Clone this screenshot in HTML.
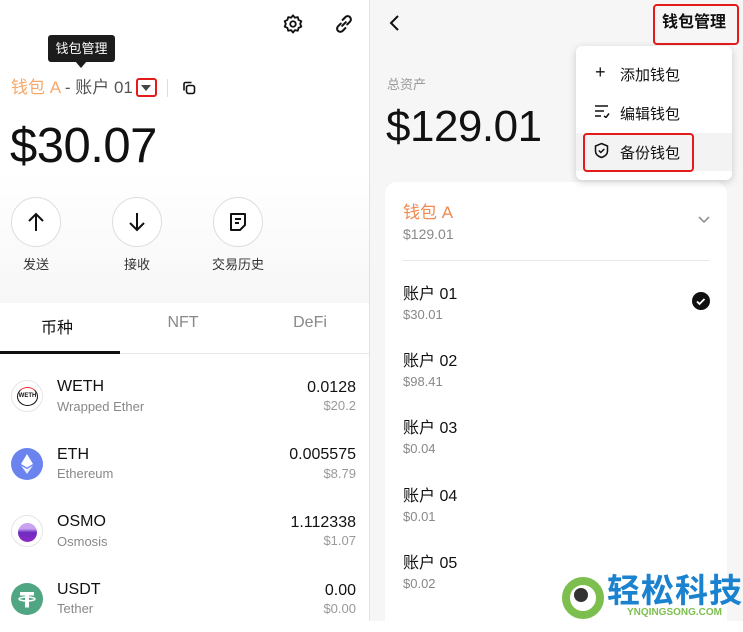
<!DOCTYPE html>
<html><head><meta charset="utf-8"><style>
*{margin:0;padding:0;box-sizing:border-box}
body{width:743px;height:621px;position:relative;overflow:hidden;font-family:"Liberation Sans","Noto Sans CJK SC",sans-serif;background:#fff;color:#111}
.a{position:absolute;white-space:nowrap}
.left{position:absolute;left:0;top:0;width:369px;height:621px;background:linear-gradient(#fff 0,#fff 170px,#f7f7f7 300px)}
.right{position:absolute;left:370px;top:0;width:373px;height:621px;background:#f6f6f6}
.circ{position:absolute;width:50px;height:50px;border-radius:50%;border:1px solid #ddd;background:#fff}
.lbl{font-size:13px;color:#333;transform:translateX(-50%)}
.nm{font-size:16px;color:#111}
.sb{font-size:13px;color:#888}
.rv{font-size:16px;color:#111;text-align:right;right:13px}
.rs{font-size:13px;color:#999;text-align:right;right:13px}
.coin{position:absolute;left:11px;width:32px;height:32px;border-radius:50%}
</style></head><body>
<div class="left">
<svg class="a" style="left:282px;top:13px" width="22" height="22" viewBox="0 0 24 24" fill="none" stroke="#111" stroke-width="2"><circle cx="12" cy="12" r="3"/><path d="M12 2.5l2 2.6 3.2-.6.9 3.1 3 1.3-1.3 3 1.3 3-3 1.3-.9 3.1-3.2-.6-2 2.6-2-2.6-3.2.6-.9-3.1-3-1.3 1.3-3-1.3-3 3-1.3.9-3.1 3.2.6z" stroke-linejoin="round"/></svg>
<svg class="a" style="left:333px;top:13px" width="22" height="22" viewBox="0 0 24 24" fill="none" stroke="#111" stroke-width="2.2" stroke-linecap="round"><path d="M10 14l4-4"/><path d="M8.5 11.5l-3 3a3.5 3.5 0 005 5l3-3"/><path d="M15.5 12.5l3-3a3.5 3.5 0 00-5-5l-3 3"/></svg>
<div class="a" style="left:48px;top:35px;width:67px;height:27px;background:#1c1c1c;border-radius:3px;color:#fff;font-size:13px;line-height:27px;text-align:center">钱包管理</div>
<div class="a" style="left:75px;top:61px;width:0;height:0;border-left:6px solid transparent;border-right:6px solid transparent;border-top:7px solid #1c1c1c"></div>
<div class="a" style="left:11px;top:77px;font-size:17px;line-height:22px"><span style="color:#f6a86a">钱包 A</span><span style="color:#555"> - 账户 01</span></div>
<div class="a" style="left:136px;top:78px;width:21px;height:19px;border:2px solid #e41b1b;border-radius:3px"></div>
<div class="a" style="left:141px;top:85px;border-left:5px solid transparent;border-right:5px solid transparent;border-top:6px solid #444"></div>
<div class="a" style="left:167px;top:79px;width:1px;height:18px;background:#ddd"></div>
<svg class="a" style="left:182px;top:81px" width="14" height="14" viewBox="0 0 14 14" fill="none" stroke="#111" stroke-width="1.6"><rect x="4.5" y="4.5" width="8" height="8" rx="2"/><path d="M2 9.5V3a1.5 1.5 0 011.5-1.5H9.5"/></svg>
<div class="a" style="left:10px;top:118px;font-size:49px;line-height:56px;color:#111;letter-spacing:-0.5px">$30.07</div>
<div class="circ" style="left:11px;top:197px"></div>
<div class="circ" style="left:112px;top:197px"></div>
<div class="circ" style="left:213px;top:197px"></div>
<svg class="a" style="left:25px;top:211px" width="22" height="22" viewBox="0 0 22 22" fill="none" stroke="#111" stroke-width="2"><path d="M11 20V3M4 10l7-7 7 7"/></svg>
<svg class="a" style="left:126px;top:211px" width="22" height="22" viewBox="0 0 22 22" fill="none" stroke="#111" stroke-width="2"><path d="M11 2v17M4 12l7 7 7-7"/></svg>
<svg class="a" style="left:228px;top:212px" width="20" height="20" viewBox="0 0 20 20" fill="none" stroke="#111" stroke-width="2"><path d="M3 2h14v11l-5 5H3z" stroke-linejoin="round"/><path d="M7 7h6M7 11h4"/></svg>
<div class="a lbl" style="left:36px;top:254px">发送</div>
<div class="a lbl" style="left:137px;top:254px">接收</div>
<div class="a lbl" style="left:238px;top:254px">交易历史</div>
<div class="a" style="left:0;top:303px;width:369px;height:318px;background:#fff"></div>
<div class="a" style="left:57px;top:314px;font-size:16px;transform:translateX(-50%)">币种</div>
<div class="a" style="left:183px;top:314px;font-size:16px;color:#888;transform:translateX(-50%)">NFT</div>
<div class="a" style="left:310px;top:314px;font-size:16px;color:#888;transform:translateX(-50%)">DeFi</div>
<div class="a" style="left:0;top:353px;width:369px;height:1px;background:#e6e6e6"></div>
<div class="a" style="left:0;top:351px;width:120px;height:3px;background:#111"></div>
<div class="coin" style="top:380px;background:#fff;border:1px solid #e5e5e5"><div style="position:absolute;left:5px;top:6px;width:21px;height:19px;border-radius:50%;border:1.5px solid #111;font-size:6px;font-weight:bold;line-height:16px;text-align:center;border-top-color:#e33">WETH</div></div>
<div class="coin" style="top:448px;background:#6a83ee"><svg width="32" height="32" viewBox="0 0 32 32"><path d="M16 6l-6 10 6 3.5 6-3.5z" fill="#fff"/><path d="M16 21l-6-3.5 6 8.5 6-8.5z" fill="#fff" opacity=".85"/></svg></div>
<div class="coin" style="top:515px;background:#fff;border:1px solid #e5e5e5"><div style="position:absolute;left:6px;top:7px;width:19px;height:19px;border-radius:50%;background:linear-gradient(#c9a2f0 30%,#6d2bbf 50%,#8e2ac7)"></div></div>
<div class="coin" style="top:583px;background:#50a582"><svg width="32" height="32" viewBox="0 0 32 32" fill="#fff"><path d="M9 9h14v3.5h-5v12h-4v-12H9z"/><ellipse cx="16" cy="16" rx="8" ry="2" fill="none" stroke="#fff" stroke-width="1.5"/></svg></div>
<div class="a nm" style="left:57px;top:378px">WETH</div><div class="a sb" style="left:57px;top:399px">Wrapped Ether</div>
<div class="a rv" style="top:379px">0.0128</div><div class="a rs" style="top:398px">$20.2</div>
<div class="a nm" style="left:57px;top:446px">ETH</div><div class="a sb" style="left:57px;top:466px">Ethereum</div>
<div class="a rv" style="top:446px">0.005575</div><div class="a rs" style="top:466px">$8.79</div>
<div class="a nm" style="left:57px;top:513px">OSMO</div><div class="a sb" style="left:57px;top:534px">Osmosis</div>
<div class="a rv" style="top:514px">1.112338</div><div class="a rs" style="top:533px">$1.07</div>
<div class="a nm" style="left:57px;top:581px">USDT</div><div class="a sb" style="left:57px;top:601px">Tether</div>
<div class="a rv" style="top:582px">0.00</div><div class="a rs" style="top:601px">$0.00</div>
</div>
<div class="a" style="left:369px;top:0;width:1px;height:621px;background:#e2e2e2"></div>
<div class="right">
<svg class="a" style="left:18px;top:13px" width="14" height="20" viewBox="0 0 14 20" fill="none" stroke="#111" stroke-width="2"><path d="M10 3l-7 7 7 7"/></svg>
<div class="a" style="left:292px;top:12px;font-size:16px;font-weight:bold;line-height:22px">钱包管理</div>
<div class="a" style="left:283px;top:4px;width:86px;height:41px;border:2px solid #e41b1b;border-radius:4px"></div>
<div class="a" style="left:17px;top:74px;font-size:13px;color:#999">总资产</div>
<div class="a" style="left:16px;top:100px;font-size:44px;line-height:54px;color:#111;letter-spacing:-0.5px">$129.01</div>
<div class="a" style="left:15px;top:182px;width:342px;height:450px;background:#fff;border-radius:12px"></div>
<div class="a" style="left:33px;top:198px;font-size:17px;color:#f08a50">钱包 A</div>
<div class="a" style="left:33px;top:226px;font-size:14px;color:#888">$129.01</div>
<svg class="a" style="left:327px;top:215px" width="14" height="10" viewBox="0 0 14 10" fill="none" stroke="#888" stroke-width="1.5"><path d="M2 2l5 5 5-5"/></svg>
<div class="a" style="left:32px;top:260px;width:308px;height:1px;background:#e8e8e8"></div>
<div class="a nm" style="left:33px;top:280px">账户 01</div><div class="a sb" style="left:33px;top:307px">$30.01</div>
<div class="a nm" style="left:33px;top:347px">账户 02</div><div class="a sb" style="left:33px;top:374px">$98.41</div>
<div class="a nm" style="left:33px;top:414px">账户 03</div><div class="a sb" style="left:33px;top:441px">$0.04</div>
<div class="a nm" style="left:33px;top:482px">账户 04</div><div class="a sb" style="left:33px;top:509px">$0.01</div>
<div class="a nm" style="left:33px;top:549px">账户 05</div><div class="a sb" style="left:33px;top:576px">$0.02</div>
<svg class="a" style="left:322px;top:292px" width="18" height="18" viewBox="0 0 18 18"><circle cx="9" cy="9" r="9" fill="#111"/><path d="M5 9.5l2.5 2.5 5-5" fill="none" stroke="#fff" stroke-width="1.8"/></svg>
<div class="a" style="left:206px;top:46px;width:156px;height:134px;background:#fff;border-radius:6px;box-shadow:0 2px 8px rgba(0,0,0,.18)"></div>
<div class="a" style="left:206px;top:133px;width:156px;height:38px;background:#f3f3f3"></div>
<div class="a" style="left:225px;top:62px;font-size:18px;line-height:20px">+</div>
<svg class="a" style="left:224px;top:104px" width="16" height="14" viewBox="0 0 16 14" fill="none" stroke="#111" stroke-width="1.5"><path d="M1 2h13M1 7h9M1 12h6M10 12l2 1.5 3-4"/></svg>
<svg class="a" style="left:224px;top:142px" width="15" height="17" viewBox="0 0 15 17" fill="none" stroke="#111" stroke-width="1.5"><path d="M7.5 1.5L13.5 4v5c0 3.5-3 5.5-6 6.5-3-1-6-3-6-6.5V4z"/><path d="M4.8 8.5l2 2 3.5-3.5"/></svg>
<div class="a" style="left:250px;top:64px;font-size:15px">添加钱包</div>
<div class="a" style="left:250px;top:103px;font-size:15px">编辑钱包</div>
<div class="a" style="left:250px;top:142px;font-size:15px">备份钱包</div>
<div class="a" style="left:213px;top:133px;width:111px;height:39px;border:2px solid #e41b1b;border-radius:4px"></div>
</div>
<div class="a" style="left:562px;top:577px;width:42px;height:42px;border-radius:50%;border:8px solid #7cbf4e;background:#fff"></div>
<div class="a" style="left:574px;top:588px;width:14px;height:14px;border-radius:50%;background:#333"></div>
<div class="a" style="left:607px;top:571px;font-size:33px;font-weight:bold;color:#1b82cf;line-height:40px;letter-spacing:1px">轻松科技</div>
<div class="a" style="left:627px;top:607px;font-size:10px;font-weight:bold;color:#7cbf4e;line-height:12px">YNQINGSONG.COM</div>
</body></html>
